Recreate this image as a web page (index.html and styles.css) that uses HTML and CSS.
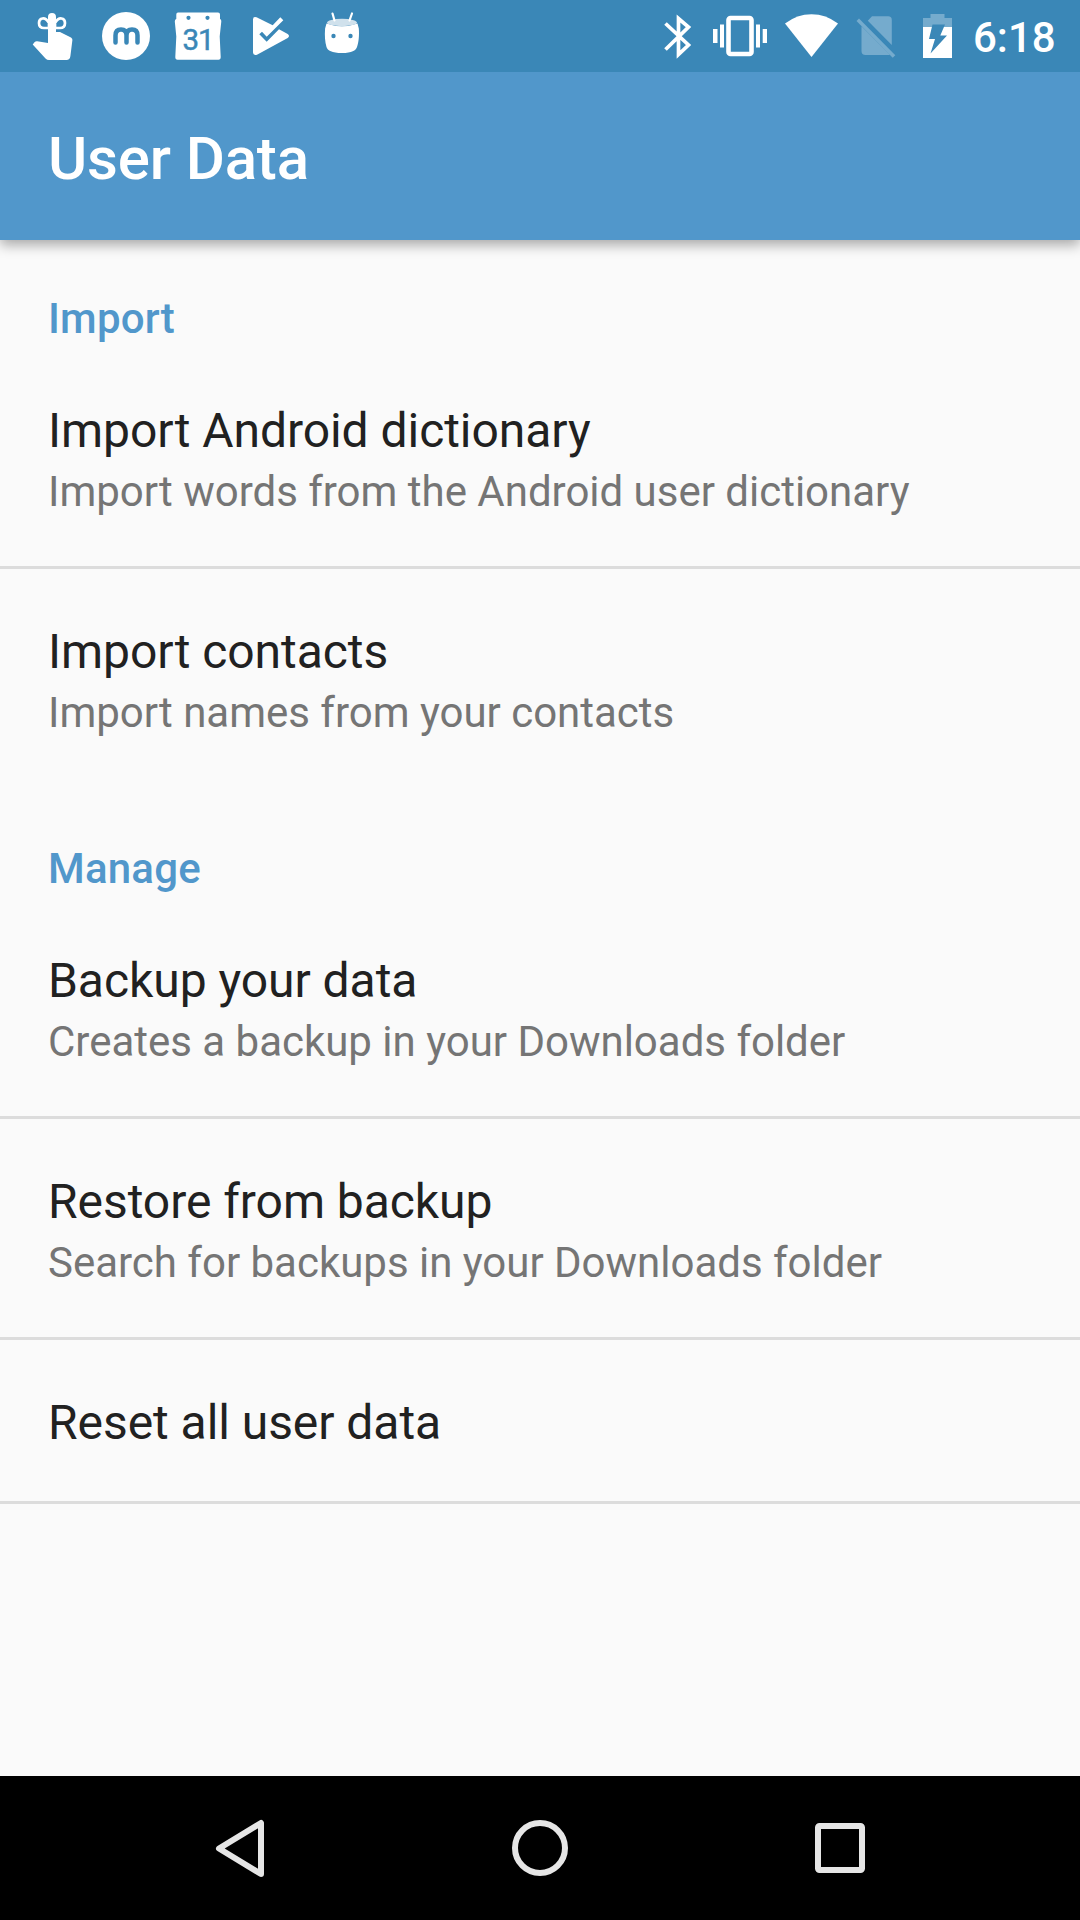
FILE: index.html
```html
<!DOCTYPE html>
<html lang="en">
<head>
<meta charset="utf-8">
<title>User Data</title>
<link rel="stylesheet" href="styles.css">
</head>
<body>
<div class="screen">
  <div class="status-bar">
    <div class="status-group">
      <svg width="72" height="72" viewBox="18 0 72 72"><path fill="#fff" d="M48 37V17a4 4 0 0 1 8 0v15h4l11 5.500q1.600 1 1.400 2.500l-2 16q-.4 4-4 4H49q-2 0-3.500-1.500L32.700 44.500l2-2.500q1-1 2.500-.8L48 43z"/><g fill="none" stroke="#fff" stroke-width="2.700"><path d="M49 23C45 16 39 18 39 23q0 5 5 5h5v-4"/><path d="M55 23c4-7 10-5 10 0q0 5-5 5h-5v-4"/></g></svg>
      <svg width="72" height="72" viewBox="90 0 72 72"><circle cx="126" cy="36" r="24" fill="#fff"/><path d="M115.500 42.500v-7q0-6 5.500-6t5.500 6v7m0-7q0-6 5.500-6t5.500 6v7" fill="none" stroke="#3a87b7" stroke-width="4.500" stroke-linecap="round"/></svg>
      <svg width="72" height="72" viewBox="162 0 72 72"><path fill="#fff" fill-rule="evenodd" d="M178 12.500h40q2 0 2 2V19q1.500.3 1.300 2.500l-1.600 15 1 20.500q0 2.800-2.200 2.800h-41q-2.200 0-2.200-2.800l1-20.500-1.500-15q0-2.300 1.500-2.500v-4.500q0-2 1.700-2zM188.500 15.700a2.100 2.100 0 1 0 0 4.200 2.100 2.100 0 0 0 0-4.200zm19 0a2.100 2.100 0 1 0 0 4.200 2.100 2.100 0 0 0 0-4.200z"/><text class="calendar-day" x="198" y="50" text-anchor="middle">31</text></svg>
      <svg width="72" height="72" viewBox="234 0 72 72"><path fill="#fff" d="M253 19.500q0-3.300 3.500-2.200l16.200 8L280.300 17.300l3 3-16.600 16.400-4.700-5-2.700 2.600 7.400 7.400L279 29.300l8.700 4.700q2.600 2 0 4L257 54.700q-4 1-4-2.200z"/></svg>
      <svg width="72" height="72" viewBox="306 0 72 72"><path fill="#fff" d="M326.500 23.500Q342 29 357.500 23.500l1.300 5c.6 7-.1 14-1.800 18.500-1.200 3.500-5 6-15 6s-14.500-2.500-15.500-6c-1.500-5-2-11.500-1.400-18.500z"/><ellipse cx="342" cy="22.500" rx="15" ry="3.700" fill="#d0e1ec"/><path d="m332.500 13.500 2 7m17.500-7-2.500 7" stroke="#fff" stroke-width="2.200" stroke-linecap="round"/><circle cx="333.500" cy="36" r="2.200" fill="#3a87b7"/><circle cx="350.500" cy="36" r="2.200" fill="#3a87b7"/></svg>
    </div>
    <div class="status-group">
      <svg width="48" height="72" viewBox="654 0 48 72"><path d="m665.500 23.500 23 21.500-10 9.500v-36l10 8.500-23 22.500" fill="none" stroke="#fff" stroke-width="3.700"/></svg>
      <svg width="76" height="72" viewBox="702 0 76 72"><rect x="728.500" y="18" width="23" height="36" rx="2" fill="none" stroke="#fff" stroke-width="4.600"/><path fill="#fff" d="M713 29h4.500v14H713zm7-4.500h4v23h-4zm36 0h4v23h-4zm6.700 4.500h4.300v14h-4.300z"/></svg>
      <svg width="68" height="72" viewBox="778 0 68 72"><path fill="#fff" d="M785 23.500Q797 14.200 811.500 14.200T838 23.500L811.500 57z"/></svg>
      <svg width="60" height="72" viewBox="846 0 60 72"><g fill="#75abcd"><path d="m872 16.300-4.200 4.400 24 24.300V20q0-3.700-3.700-3.700zM861.500 26.200V51q0 4 4 4h22.800q1 0 1.500-.5z"/><path d="m859 18.500 36.300 36.700-2.600 2.600L856.500 21z"/></g></svg>
      <svg width="60" height="72" viewBox="906 0 60 72"><path fill="#75abcd" d="M930.500 18v-4h14v4h7.500v10h-29V18z"/><path fill="#fff" d="M923 27h29v31h-29z"/><path fill="#3a87b7" d="M932.500 24.500h12.500l-4.700 11h6.700l-16.500 18 4.500-14.500h-6z"/></svg>
      <span class="clock">6:18</span>
    </div>
  </div>
  <header class="app-bar"><h1 class="app-title">User Data</h1></header>
  <main class="settings">
    <h2 class="section-title">Import</h2>
    <div class="item"><div class="item-title">Import Android dictionary</div><div class="item-summary">Import words from the Android user dictionary</div></div>
    <div class="item item-last"><div class="item-title">Import contacts</div><div class="item-summary">Import names from your contacts</div></div>
    <h2 class="section-title">Manage</h2>
    <div class="item"><div class="item-title">Backup your data</div><div class="item-summary">Creates a backup in your Downloads folder</div></div>
    <div class="item"><div class="item-title">Restore from backup</div><div class="item-summary">Search for backups in your Downloads folder</div></div>
    <div class="item"><div class="item-title">Reset all user data</div></div>
  </main>
  <nav class="nav-bar">
    <svg width="300" height="144" viewBox="90 0 300 144"><path d="M219 72.500 261 47v51z" fill="none" stroke="#e6e6e6" stroke-width="6" stroke-linejoin="round"/></svg>
    <svg width="300" height="144" viewBox="390 0 300 144"><circle cx="540" cy="72" r="25" fill="none" stroke="#e6e6e6" stroke-width="6"/></svg>
    <svg width="300" height="144" viewBox="690 0 300 144"><rect x="818" y="50" width="44" height="44" rx="1.500" fill="none" stroke="#e6e6e6" stroke-width="6"/></svg>
  </nav>
</div>
</body>
</html>
```
FILE: styles.css
```css
* { box-sizing: border-box; }

body {
  margin: 0;
  font-family: Roboto, sans-serif;
}

svg { display: block; flex: none; }

.screen {
  display: flex;
  flex-direction: column;
  width: 1080px;
  height: 1920px;
  background: #fafafa;
  overflow: hidden;
}

.status-bar {
  z-index: 1;
  display: flex;
  justify-content: space-between;
  height: 72px;
  flex: none;
  padding: 0 0 0 18px;
  background: #3a87b7;
}

.status-group { display: flex; }

.clock {
  width: 114px;
  padding: 4px 0 0 7px;
  font-size: 42px;
  font-weight: 500;
  line-height: 68px;
  white-space: nowrap;
  color: #fff;
}

.status-group:last-child { width: 426px; }

.calendar-day {
  font-size: 29.5px;
  font-weight: 400;
  letter-spacing: -1px;
  fill: #3a87b7;
  stroke: #3a87b7;
  stroke-width: 0.5px;
}

.app-bar {
  display: flex;
  align-items: center;
  height: 168px;
  flex: none;
  padding: 4px 48px 0;
  background: #5197cb;
  box-shadow: 0 5px 12px rgba(0, 0, 0, 0.33);
}

.app-title {
  margin: 0;
  font-size: 60px;
  font-weight: 500;
  letter-spacing: -0.15px;
  color: #fff;
}

.settings { flex: 1; }

.section-title {
  height: 108px;
  margin: 0;
  padding: 54px 48px 5px;
  font-size: 42px;
  font-weight: 500;
  line-height: 49px;
  letter-spacing: 0.2px;
  color: #5197cb;
}

.item {
  padding: 50px 48px 46px;
  border-bottom: 3px solid #dcdcdc;
}

.item-last { border-color: transparent; }

.item-title {
  font-size: 48px;
  line-height: 65px;
  letter-spacing: -0.05px;
  color: #212121;
}

.item-summary {
  font-size: 42px;
  line-height: 57px;
  letter-spacing: -0.01px;
  color: #757575;
}

.nav-bar {
  display: flex;
  justify-content: center;
  height: 144px;
  flex: none;
  background: #000;
}
```
